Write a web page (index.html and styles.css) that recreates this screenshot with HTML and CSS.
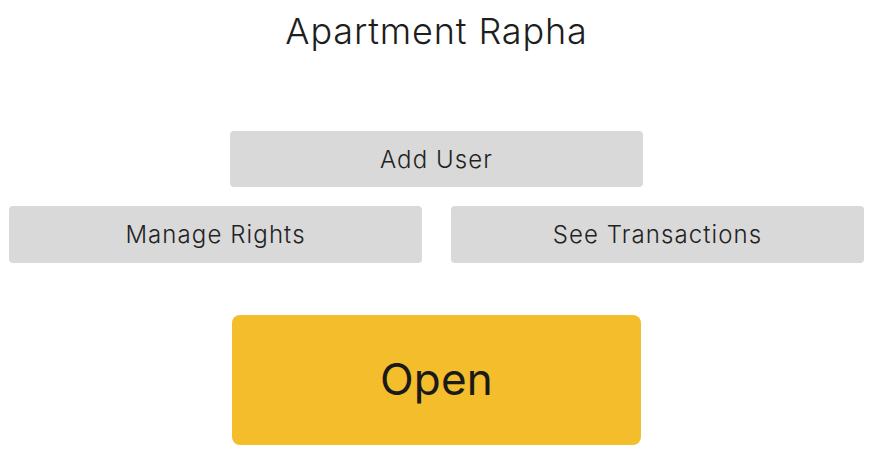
FILE: index.html
```html
<!DOCTYPE html>
<html>
<head>
<meta charset="utf-8">
<link rel="stylesheet" href="styles.css">
</head>
<body>
<main class="page">
  <h1 class="title">Apartment Rapha</h1>
  <div class="actions">
    <button class="btn btn-wide">Add User</button>
    <div class="row">
      <button class="btn">Manage Rights</button>
      <button class="btn">See Transactions</button>
    </div>
  </div>
  <button class="open">Open</button>
</main>
</body>
</html>
```
FILE: styles.css
```css
* { box-sizing: border-box; }
html, body { margin: 0; padding: 0; background: #fff; }
body {
  font-family: "Inter", "Lato", sans-serif;
  color: #222;
}
.page {
  display: flex;
  flex-direction: column;
  align-items: center;
  padding: 0 9px;
}
.title {
  margin: 0 0 69px;
  font-size: 36px;
  line-height: 62px;
  font-weight: 300;
  letter-spacing: 0.85px;
  color: #1e1e1e;
}
.actions {
  width: 100%;
  display: flex;
  flex-direction: column;
  align-items: center;
  gap: 19px;
}
.row {
  width: 100%;
  display: grid;
  grid-template-columns: 1fr 1fr;
  gap: 29px;
}
.btn {
  font-family: inherit;
  border: none;
  background: #d9d9d9;
  border-radius: 4px;
  height: 57px;
  font-size: 24px;
  font-weight: 300;
  letter-spacing: 1.1px;
  color: #222;
  padding: 0;
}
.btn-wide {
  width: 413px;
  height: 56px;
}
.open {
  margin-top: 52px;
  width: 409px;
  height: 130px;
  border: none;
  border-radius: 8px;
  background: #f3bd2b;
  font-family: inherit;
  font-size: 44px;
  font-weight: 400;
  letter-spacing: 0.2px;
  line-height: 1;
  padding: 0 0 3px;
  color: #1a1a1a;
}
```
